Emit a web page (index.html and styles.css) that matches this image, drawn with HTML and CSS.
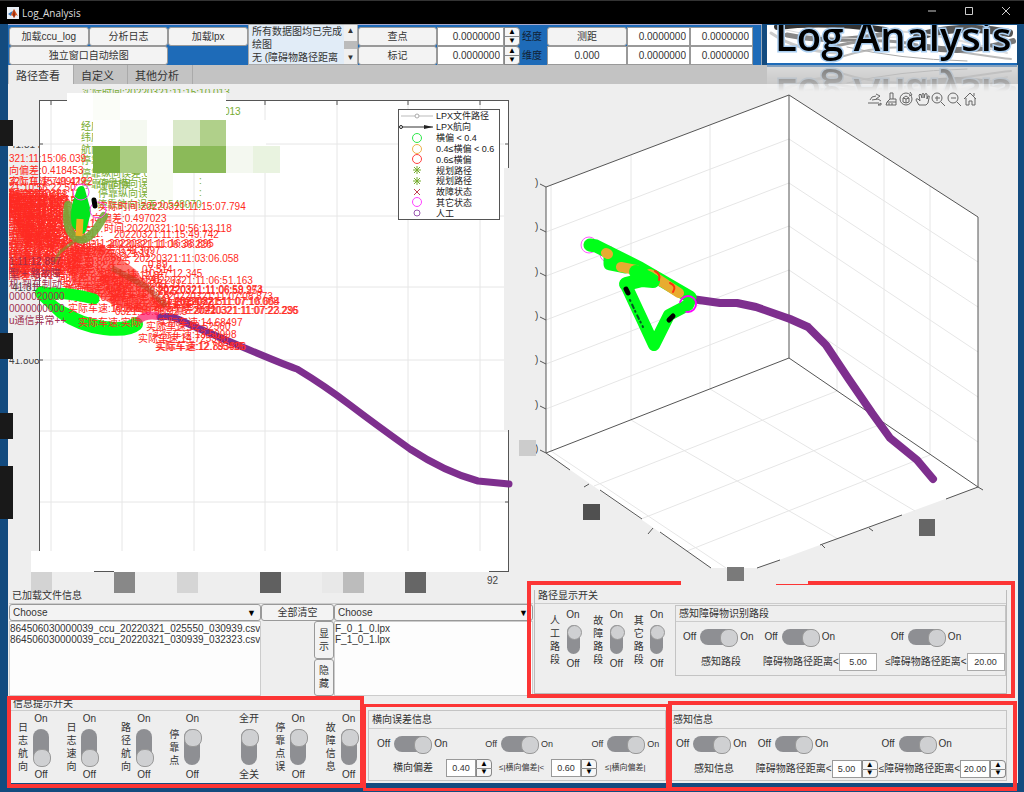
FILE: index.html
```html
<!DOCTYPE html>
<html lang="zh">
<head>
    <meta charset="UTF-8">
    <meta name="viewport" content="width=device-width, initial-scale=1.0">
    <title>Log_Analysis</title>
    <link rel="stylesheet" href="styles.css">
</head>
<body>
    <header class="titlebar">
        <svg class="logo" viewBox="0 0 12 12">
            <rect width="12" height="12" fill="#e8eef5"/>
            <path d="M1 7l3-2 2-1-2 5z" fill="#3a78b8"/>
            <path d="M4 8L7 2l4 7-2-1-2 3-1-2z" fill="#d9541e"/>
            <path d="M7 2l-1 6 1 3 1-3z" fill="#8a2a12"/>
        </svg>
        <span class="window-title">Log_Analysis</span>
        <button class="win-btn" aria-label="最小化"><svg viewBox="0 0 10 10"><path d="M1 5h8"/></svg></button>
        <button class="win-btn" aria-label="最大化"><svg viewBox="0 0 10 10"><path d="M1.5 1.5h7v7h-7z"/></svg></button>
        <button class="win-btn" aria-label="关闭"><svg viewBox="0 0 10 10"><path d="M1 1l8 8M9 1l-8 8"/></svg></button>
    </header>

    <main class="app">
        <div class="toolbar">
            <div class="actions">
                <button class="btn">加载ccu_log</button>
                <button class="btn">分析日志</button>
                <button class="btn">加载lpx</button>
                <button class="btn wide">独立窗口自动绘图</button>
            </div>
            <div class="log">
                <textarea class="log-text" aria-label="日志" readonly>所有数据图均已完成
绘图
无 (障碍物路径距离</textarea>
                <div class="scrollbar"><span>▲</span><i></i><span>▼</span></div>
            </div>
            <div class="points">
                <button class="btn">查点</button>
                <div class="spinner">
                    <input id="lng" value="0.0000000">
                    <div class="arrows"><button aria-label="加">▲</button><button aria-label="减">▼</button></div>
                </div>
                <label class="coord" for="lng">经度</label>
                <button class="btn">测距</button>
                <input class="num" aria-label="起点经度" value="0.0000000">
                <input class="num" aria-label="终点经度" value="0.0000000">
                <button class="btn">标记</button>
                <div class="spinner">
                    <input id="lat" value="0.0000000">
                    <div class="arrows"><button aria-label="加">▲</button><button aria-label="减">▼</button></div>
                </div>
                <label class="coord" for="lat">维度</label>
                <input class="num center" aria-label="距离" value="0.000">
                <input class="num" aria-label="起点维度" value="0.0000000">
                <input class="num" aria-label="终点维度" value="0.0000000">
            </div>
            <div class="banner">
                <svg viewBox="0 0 250 40" preserveAspectRatio="xMidYMid slice">
                    <rect width="250" height="40" fill="#fff"/>
                    <g fill="none" stroke-linecap="round">
                        <path d="M10 2Q60-4 118 5" stroke="#333" stroke-width="6"/>
                        <path d="M20 10Q70 20 122 8" stroke="#888" stroke-width="5"/>
                        <path d="M60 24Q100 10 150 20" stroke="#999" stroke-width="3"/>
                        <path d="M70 33Q120 16 180 25T244 34" stroke="#bbb" stroke-width="2"/>
                        <path d="M150 12Q190-2 242 8" stroke="#555" stroke-width="8"/>
                        <path d="M160 22Q200 30 246 16" stroke="#777" stroke-width="6"/>
                        <path d="M4 8Q30 26 70 28" stroke="#ccc" stroke-width="3"/>
                        <path d="M80 22Q130 34 200 36" stroke="#aaa" stroke-width="1"/>
                        <path d="M130 6Q180 10 240 28" stroke="#ddd" stroke-width="2"/>
                        <path d="M14 4Q70 18 130 12" stroke="#ddd" stroke-width="1"/>
                    </g>
                    <path d="M0 39H250" stroke="#1e6bb8" stroke-width="2"/>
                    <text class="banner-text" x="8" y="26">Log Analysis</text>
                </svg>
            </div>
        </div>

        <nav class="tabs">
            <button class="tab active">路径查看</button>
            <button class="tab">自定义</button>
            <button class="tab">其他分析</button>
        </nav>

        <svg class="plots" viewBox="8 84 1010 506">
            <defs>
                <clipPath id="axes-clip"><rect x="9" y="89" width="500" height="484"/></clipPath>
                <clipPath id="strip-clip"><rect x="80" y="89" width="150" height="4"/></clipPath>
                <clipPath id="tick-clip"><rect x="9" y="359" width="30" height="10"/><rect x="9" y="146" width="30" height="5"/></clipPath>
                <g id="asterisk"><path d="M-4 0H4M0-4V4M-3-3L3 3M3-3L-3 3" stroke="#77ac30"/></g>
            </defs>

            <!-- 2D axes -->
            <path d="M39 101H509V168H504V430H509V572H31V551H39Z" fill="#fff"/>
            <path class="grid" d="M51 101V551M122 101V551M194 101V551M265 101V551M337 101V551M408 101V551M480 101V551M39 144H504M39 216H504M39 287H504M39 360H504M39 431H509M39 502H509"/>
            <path class="axis" d="M39.5 551V101M39 100.500H509M508.500 100V168M508.500 430V571M489 571.500H509M94 571.500H114M51 101v4M265 101v4M337 101v4M408 101v4M480 101v4M39 144h4M39 216h4M39 287h4M39 360h4M505 144h4M505 502h4"/>
            <text class="tick" x="10" y="148" clip-path="url(#tick-clip)">41.814</text>
            <text class="tick" x="9" y="364" clip-path="url(#tick-clip)">41.808</text>
            <text class="tick" x="487" y="584">92</text>

            <g class="note green">
                <text x="82" y="96" clip-path="url(#strip-clip)">实际时间:20220321:11:15:10.013</text>
                <text x="224" y="115">013</text>
                <text x="81" y="130">经度</text>
                <text x="81" y="141">纬度</text>
                <text x="81" y="153">航向</text>
                <text x="81" y="164">停靠</text>
                <text x="81" y="177">停靠纵向误差:0.4</text>
                <text x="81" y="188">停靠航向误</text>
                <text x="98" y="187">停靠横向误</text>
                <text x="98" y="197">停靠纵向误</text>
                <text x="97" y="208">停靠航向误差:0.548070</text>
                <text x="199" y="184">:</text>
                <text x="199" y="196">:</text>
            </g>

            <path d="M160 317Q170 315 180 320T240 346T297 369Q325 386 350 405T410 449Q445 472 478 481L509 484" fill="none" stroke="#7e2f8e" stroke-width="7" stroke-linecap="round" stroke-linejoin="round"/>

            <path d="M64 248L104 246L136 270L162 306L146 314L112 304L74 284Z" fill="#ff1b12" opacity="0.6"/>
            <g id="cloud" class="note red" clip-path="url(#axes-clip)"></g>

            <path d="M42 293L62 312Q80 325 104 328T136 324" fill="none" stroke="#00ff19" stroke-width="14" stroke-linecap="round"/>
            <path d="M42 293Q68 292 94 299" fill="none" stroke="#00ff19" stroke-width="11" stroke-linecap="round"/>
            <path d="M54 299L74 303L88 312Q66 311 54 299" fill="#fff"/>
            <path d="M81 190Q76 204 74 214T82 230L87 212Z" fill="#00e61c" stroke="#00e61c" stroke-width="8" stroke-linejoin="round"/>
            <path d="M68 205Q64 230 76 238T104 216" fill="none" stroke="#77a83a" stroke-width="8" stroke-linecap="round" opacity="0.9"/>
            <path d="M80 219L79 236" fill="none" stroke="#edb120" stroke-width="7"/>
            <path d="M76 240L60 252L54 262" fill="none" stroke="#8d8a2a" stroke-width="3" opacity="0.7"/>
            <path d="M112 268L148 288L166 306" fill="none" stroke="#b3401c" stroke-width="6" opacity="0.5"/>
            <circle cx="81" cy="192" r="8" fill="none" stroke="#ff4df5"/>
            <circle cx="98" cy="210" r="8" fill="none" stroke="#ff4df5"/>
            <path d="M94 200L95 206" stroke="#000" stroke-width="5" stroke-linecap="round"/>
            <path d="M138 321Q144 314 158 316" fill="none" stroke="#ff1464" stroke-width="8" opacity="0.7"/>
            <g class="note red">
                <text x="68" y="312">实际车速:10.2884</text>
                <text x="78" y="326">实际车速:实际</text>
            </g>
            <text class="tick" x="12" y="291">41.81</text>

            <g class="note maroon" clip-path="url(#axes-clip)">
                <text x="9" y="265">1:11:12.897</text>
                <text x="9" y="277">型:+ 路故障</text>
                <text x="9" y="288">机:刹车制动</text>
                <text x="9" y="300">0000020000</text>
                <text x="9" y="312">0000000000</text>
                <text x="9" y="324">u通信异常++</text>
            </g>

            <!-- legend -->
            <rect x="398.500" y="109.500" width="101" height="110" fill="#fff" stroke="#555"/>
            <path d="M401 116H433" stroke="#bbb"/>
            <circle cx="417" cy="116" r="2" fill="#fff" stroke="#aaa"/>
            <path d="M401 127H433" stroke="#333"/>
            <circle cx="401" cy="127" r="1.500" fill="#fff" stroke="#222"/>
            <path d="M433 127l-9-2v4z" fill="#222"/>
            <g fill="none">
                <circle cx="417" cy="138" r="4.500" stroke="#2fe84a"/>
                <circle cx="417" cy="149" r="4.500" stroke="#edb14a"/>
                <circle cx="417" cy="159" r="4.500" stroke="#ff4040"/>
                <use href="#asterisk" x="417" y="170"/>
                <use href="#asterisk" x="417" y="181"/>
                <path d="M414 189l6 6M420 189l-6 6" stroke="#c04050"/>
                <circle cx="417" cy="202" r="4.500" stroke="#ff40ff"/>
                <circle cx="417" cy="213" r="3" stroke="#9a55b0"/>
            </g>
            <g class="legend-text">
                <text x="436" y="119">LPX文件路径</text>
                <text x="436" y="130">LPX航向</text>
                <text x="436" y="141">横偏 &lt; 0.4</text>
                <text x="436" y="152">0.4≤横偏 &lt; 0.6</text>
                <text x="436" y="163">0.6≤横偏</text>
                <text x="436" y="174">规划路径</text>
                <text x="436" y="184">规划路径</text>
                <text x="436" y="195">故障状态</text>
                <text x="436" y="206">其它状态</text>
                <text x="436" y="217">人工</text>
            </g>

            <!-- masked labels -->
            <path d="M67 93H226V120H266V146H93V120H67Z" fill="#fff"/>
            <g>
                <rect x="93" y="93" width="27" height="27" fill="#fbfdf8"/>
                <rect x="120" y="120" width="27" height="26" fill="#f5f9f1"/>
                <rect x="173" y="120" width="27" height="26" fill="#d9e8c8"/>
                <rect x="200" y="120" width="26" height="26" fill="#b0d08a"/>
                <rect x="93" y="146" width="27" height="27" fill="#78ad3e"/>
                <rect x="120" y="146" width="27" height="27" fill="#aacd82"/>
                <rect x="147" y="146" width="26" height="27" fill="#f8fbf4"/>
                <rect x="173" y="146" width="53" height="27" fill="#8bba59"/>
                <rect x="226" y="146" width="27" height="27" fill="#f4f8f0"/>
                <rect x="253" y="146" width="27" height="27" fill="#e9f3e0"/>
                <rect x="147" y="173" width="26" height="27" fill="#f8fbf3"/>
            </g>
            <g fill="#191919">
                <rect x="0" y="120" width="13" height="26"/>
                <rect x="0" y="333" width="13" height="26"/>
                <rect x="0" y="413" width="13" height="26"/>
                <rect x="0" y="466" width="13" height="53"/>
            </g>
            <rect x="31" y="572" width="21" height="21" fill="#d3d3d3"/>
            <rect x="114" y="572" width="21" height="21" fill="#888"/>
            <rect x="177" y="572" width="21" height="21" fill="#d5d5d5"/>
            <rect x="260" y="572" width="21" height="21" fill="#606060"/>
            <rect x="322" y="572" width="21" height="21" fill="#e8e8e8"/>
            <rect x="343" y="572" width="21" height="21" fill="#bcbcbc"/>
            <rect x="405" y="572" width="21" height="21" fill="#666"/>

            <!-- 3D axes -->
            <path d="M546 187L789 95L978 217V487L757 568H711L546 453Z" fill="#fff"/>
            <path class="grid" d="M546 232L789 139L978 262M546 276L789 183L978 307M546 320L789 226L978 352M546 364L789 270L978 397M546 409L789 314L978 442
                M551 185V451M631 155V420M710 125V389M837 126V391M884 156V423M930 186V455
                M551 451L726 568M631 420L838 539M710 389L915 511M837 391L594 486M884 423L641 519M930 455L687 551"/>
            <path class="axis" d="M546 453V187L789 95V358L546 453L570 470M789 95L978 217V487L789 358M978 487L946 499M902 515L820 545M780 560L757 568M600 490L642 519M660 532L711 568"/>
            <path class="axis" d="M546 187l-6-3M546 232l-6-3M546 276l-6-3M546 320l-6-3M546 364l-6-3M546 409l-6-3M546 453l-6-3M589 484l-5 3M653 528l-5 6M822 545l3 3M869 528l4 3M978 487l5 3"/>
            <g class="tick">
                <text x="535" y="186">)</text>
                <text x="535" y="230">)</text>
                <text x="535" y="275">)</text>
                <text x="535" y="319">)</text>
                <text x="535" y="363">)</text>
                <text x="535" y="408">)</text>
                <text x="535" y="452">)</text>
            </g>
            <rect x="519" y="440" width="17" height="16" fill="#ccc"/>
            <rect x="583" y="504" width="17" height="16" fill="#505050"/>
            <rect x="727" y="567" width="17" height="17" fill="#7a7a7a"/>
            <rect x="919" y="519" width="16" height="17" fill="#666"/>

            <g fill="none" stroke-linecap="round" stroke-linejoin="round">
                <path d="M692 299L720 303L737 303L756 307L790 319L808 327L826 345L848 378L872 413L890 438L917 460L933 479" stroke="#7e2f8e" stroke-width="8"/>
                <circle cx="589" cy="245" r="8" stroke="#ff5cff"/>
                <circle cx="608" cy="254" r="8" stroke="#ff5cff"/>
                <path d="M590 245L596 246L612 254L640 268L690 297" stroke="#00ff19" stroke-width="13"/>
                <path d="M610 256L610 264L625 267" stroke="#00ff19" stroke-width="13"/>
                <path d="M606 253L608 254M621 267L636 270M650 274L679 293" stroke="#e8ac30" stroke-width="10"/>
                <path d="M626 284L642 280L653 281" stroke="#00ff19" stroke-width="14"/>
                <path d="M636 272L650 279" stroke="#00ff19" stroke-width="14"/>
                <path d="M626 285L654 345L669 315L688 305" stroke="#00ff19" stroke-width="12"/>
                <path d="M655 271Q661 274 659 280M670 283Q677 286 673 292" stroke="#ff3010" stroke-width="2"/>
                <path d="M626 289L628 293M669 320L673 316" stroke="#000" stroke-width="5"/>
                <path d="M630 300L636 313L643 327" stroke="#052" stroke-width="2" stroke-dasharray="1 4 4 3"/>
                <circle cx="688" cy="304" r="8" stroke="#ff00ff" stroke-width="2"/>
                <path d="M680 309L690 303" stroke="#00ff19" stroke-width="10"/>
            </g>

            <!-- axes tools -->
            <g class="tools">
                <path d="M868 103h11M870 100q1-4 6-4M876 94l4 2-4 3M872 100l6-1 3 2M878 105h3v-2z"/>
                <path d="M890 93h3v6h3v6h-10l1-3 3-3zM887 102h9M890 99h3M889 105v-2M892 105v-2"/>
                <circle cx="906" cy="99" r="6"/>
                <path d="M903 98l3-2 3 2v4l-3 1-3-1zM903 98l3 1 3-1M906 99v4M910 92l2 3-3 1"/>
                <path d="M919 105l-3-5q0-2 2-1l2 2-1-6q1-2 2 0l1 3v-4q1-1 2 0v4l1-4q1-1 2 0v5l1-3q2-1 1 2l-1 5-2 2z"/>
                <circle cx="937" cy="98" r="5"/>
                <path d="M941 102l4 4M935 98h5M937 96v5"/>
                <circle cx="953" cy="98" r="5"/>
                <path d="M957 102l4 4M951 98h5"/>
                <path d="M964 99l6-6 6 6M966 98v7h3v-4h3v4h3v-7M974 96v-3"/>
            </g>
        </svg>

        <div class="row files-row">
            <section class="files">
                <h2 class="panel-title">已加载文件信息</h2>
                <div class="files-grid">
                    <div class="file-col">
                        <div class="drop"><select aria-label="日志文件"><option>Choose</option></select></div>
                        <select class="list" aria-label="已加载日志" multiple>
                            <option>864506030000039_ccu_20220321_025550_030939.csv</option>
                            <option>864506030000039_ccu_20220321_030939_032323.csv</option>
                        </select>
                    </div>
                    <div class="file-btns">
                        <button class="btn clear">全部清空</button>
                        <button class="btn tall">显示</button>
                        <button class="btn tall">隐藏</button>
                    </div>
                    <div class="file-col">
                        <div class="drop"><select aria-label="路径文件"><option>Choose</option></select></div>
                        <select class="list" aria-label="已加载路径" multiple>
                            <option>F_0_1_0.lpx</option>
                            <option>F_1_0_1.lpx</option>
                        </select>
                    </div>
                </div>
            </section>

            <section class="paths">
                <div class="mark mark-paths"></div>
                <div class="mark-gap"></div>
                <h2 class="panel-title">路径显示开关</h2>
                <div class="paths-body">
                    <div class="v-switches">
                        <label class="v-switch small"><span class="v-name">人工路段</span><span class="v-col">On<input type="checkbox" checked>Off</span></label>
                        <label class="v-switch small"><span class="v-name">故障路段</span><span class="v-col">On<input type="checkbox" checked>Off</span></label>
                        <label class="v-switch small"><span class="v-name">其它路段</span><span class="v-col">On<input type="checkbox" checked>Off</span></label>
                    </div>
                    <div class="panel sense-paths">
                        <h3 class="panel-title">感知障碍物识别路段</h3>
                        <div class="sw-row sense-sw">
                            <label class="switch">Off<input type="checkbox" checked>On</label>
                            <label class="switch">Off<input type="checkbox" checked>On</label>
                            <label class="switch">Off<input type="checkbox" checked>On</label>
                        </div>
                        <div class="sw-row sense-val">
                            <span>感知路段</span>
                            <label for="p-near">障碍物路径距离&lt;</label>
                            <input id="p-near" class="box" value="5.00">
                            <label for="p-far">≤障碍物路径距离&lt;</label>
                            <input id="p-far" class="box" value="20.00">
                        </div>
                    </div>
                </div>
            </section>
        </div>

        <div class="row info-row">
            <section class="tips">
                <div class="mark mark-tips"></div>
                <h2 class="panel-title">信息提示开关</h2>
                <div class="tips-body">
                    <label class="v-switch"><span class="v-name">日志航向</span><span class="v-col">On<input type="checkbox">Off</span></label>
                    <label class="v-switch"><span class="v-name">日志速向</span><span class="v-col">On<input type="checkbox">Off</span></label>
                    <label class="v-switch"><span class="v-name">路径航向</span><span class="v-col">On<input type="checkbox">Off</span></label>
                    <label class="v-switch"><span class="v-name">停靠点</span><span class="v-col">On<input type="checkbox" checked>Off</span></label>
                    <label class="v-switch"><span class="v-col">全开<input type="checkbox" checked>全关</span></label>
                    <label class="v-switch"><span class="v-name">停靠点误</span><span class="v-col">On<input type="checkbox" checked>Off</span></label>
                    <label class="v-switch"><span class="v-name">故障信息</span><span class="v-col">On<input type="checkbox" checked>Off</span></label>
                </div>
            </section>

            <section class="lateral">
                <div class="mark mark-lateral"></div>
                <div class="panel">
                    <h2 class="panel-title">横向误差信息</h2>
                    <div class="sw-row lateral-sw">
                        <label class="switch">Off<input type="checkbox" checked>On</label>
                        <label class="switch mini">Off<input type="checkbox" checked>On</label>
                        <label class="switch mini">Off<input type="checkbox" checked>On</label>
                    </div>
                    <div class="sw-row lateral-val">
                        <label for="l-low">横向偏差</label>
                        <div class="spinner box-spin">
                            <input id="l-low" value="0.40">
                            <div class="arrows"><button aria-label="加">▲</button><button aria-label="减">▼</button></div>
                        </div>
                        <label class="mini" for="l-high">≤|横向偏差|&lt;</label>
                        <div class="spinner box-spin">
                            <input id="l-high" value="0.60">
                            <div class="arrows"><button aria-label="加">▲</button><button aria-label="减">▼</button></div>
                        </div>
                        <span class="mini">≤|横向偏差|</span>
                    </div>
                </div>
            </section>

            <section class="sense">
                <div class="mark mark-sense"></div>
                <div class="panel">
                    <h2 class="panel-title">感知信息</h2>
                    <div class="sw-row sense-sw">
                        <label class="switch">Off<input type="checkbox" checked>On</label>
                        <label class="switch">Off<input type="checkbox" checked>On</label>
                        <label class="switch">Off<input type="checkbox" checked>On</label>
                    </div>
                    <div class="sw-row sense-val">
                        <span>感知信息</span>
                        <label for="s-near">障碍物路径距离&lt;</label>
                        <div class="spinner box-spin">
                            <input id="s-near" value="5.00">
                            <div class="arrows"><button aria-label="加">▲</button><button aria-label="减">▼</button></div>
                        </div>
                        <label for="s-far">≤障碍物路径距离&lt;</label>
                        <div class="spinner box-spin">
                            <input id="s-far" value="20.00">
                            <div class="arrows"><button aria-label="加">▲</button><button aria-label="减">▼</button></div>
                        </div>
                    </div>
                </div>
            </section>
        </div>
    </main>

    <script src="cloud.js"></script>
</body>
</html>
```
FILE: styles.css
```css
* {
    box-sizing: border-box;
}
body {
    margin: 0;
    min-height: 100vh;
    background-color: #134b7f;
    color: #333;
    font-family: "Liberation Sans", "Noto Sans CJK SC", sans-serif;
    font-size: 10px;
    line-height: 12px;
}
button, input, select, textarea {
    margin: 0;
    padding: 0;
    min-width: 0;
    border-radius: 0;
    font: inherit;
    color: inherit;
}
h2, h3 {
    margin: 0;
    font-size: 10px;
    font-weight: normal;
}

/* title bar */
.titlebar {
    display: flex;
    align-items: center;
    height: 24px;
    padding: 0 0 0 7px;
    border-top: 1px solid #333;
    background-color: #000;
    color: #ddd;
}
.logo {
    width: 12px;
    height: 12px;
}
.window-title {
    flex: 1;
    margin-left: 3px;
    font-family: "Open Sans", sans-serif;
}
.win-btn {
    width: 37px;
    height: 23px;
    border: 0;
    background: none;
}
.win-btn svg {
    width: 10px;
    height: 10px;
    fill: none;
    stroke: #ccc;
}

.app {
    padding: 0 6px 0 8px;
}

/* toolbar */
.toolbar {
    display: grid;
    grid-template-columns: 240fr 110fr 404fr 256fr;
    height: 41px;
}
.actions, .points {
    display: grid;
    grid-template-rows: 19px 19px;
    padding: 2px 0 0 1px;
    border-top: 1px solid #aac;
    background-color: #1e6bb8;
}
.actions {
    grid-template-columns: 1fr 1fr 1fr;
}
.wide {
    grid-column: span 2;
}
.btn {
    border: 1px solid #999;
    border-radius: 3px;
    background-color: #f3f3f3;
}
.log {
    display: flex;
    min-width: 0;
    border: 1px solid #aaa;
    background-color: #e1ecf7;
}
.log-text {
    flex: 1;
    padding: 0 0 0 3px;
    border: 0;
    background: none;
    line-height: 13px;
    resize: none;
    overflow: hidden;
    white-space: pre;
}
.scrollbar {
    display: flex;
    flex-direction: column;
    justify-content: space-between;
    width: 13px;
    background-color: #f0f0f0;
    font-size: 8px;
    text-align: center;
}
.scrollbar i {
    height: 8px;
    background-color: #bbb;
}
.points {
    grid-template-columns: 79fr 83fr 27fr 80fr 63fr 63fr;
    padding: 2px 8px 0 0;
    border-right: 1px solid #9ab;
}
.spinner {
    display: flex;
    min-width: 0;
}
.spinner input, .num {
    width: 100%;
    border: 1px solid #999;
    padding-right: 3px;
    background-color: #fff;
    text-align: right;
}
.num.center {
    padding: 0;
    text-align: center;
}
.arrows {
    display: flex;
    flex: none;
    flex-direction: column;
    width: 16px;
}
.arrows button {
    flex: 1;
    border: 1px solid #888;
    background-color: #f6f6f6;
    color: #000;
    font-size: 8px;
    line-height: 6px;
}
.arrows button:first-child {
    border-radius: 0 4px 0 0;
}
.arrows button:last-child {
    border-radius: 0 0 4px 0;
    border-top: 0;
}
.coord {
    align-self: center;
    padding-left: 2px;
    color: #123;
    white-space: nowrap;
}
.banner {
    z-index: 1;
    padding: 1px 1px 0 5px;
    -webkit-box-reflect: below 0 linear-gradient(transparent 35%, rgba(0, 0, 0, 0.4));
}
.banner svg {
    display: block;
    width: 100%;
    height: 40px;
}
.banner-text {
    font-family: "Open Sans", sans-serif;
    font-size: 40px;
    font-weight: 600;
    fill: #000;
    stroke: #a9cdf0;
    stroke-width: 3px;
    paint-order: stroke;
}

/* tabs */
.tabs {
    display: flex;
    height: 19px;
    padding-left: 1px;
    background-color: #c3c3c3;
}
.tab {
    padding: 3px 13px 0 7px;
    border: 0;
    border-right: 1px solid #aaa;
    background-color: #c3c3c3;
    font-size: 11px;
}
.tab.active {
    background-color: #eee;
}

/* plots */
.plots {
    display: block;
    width: 100%;
    background-color: #eee;
    overflow: visible;
}
.grid {
    fill: none;
    stroke: #e6e6e6;
}
.axis {
    fill: none;
    stroke: #555;
}
.tick {
    font-size: 10px;
    fill: #444;
}
.legend-text {
    font-size: 9px;
    fill: #222;
}
.note {
    font-size: 10px;
}
.green {
    fill: #77ac30;
}
.red {
    fill: #ff2a22;
}
.maroon {
    fill: #a03050;
}
.tools {
    fill: none;
    stroke: #666;
}

/* lower panels */
.row {
    display: grid;
    background-color: #eee;
}
.files-row {
    grid-template-columns: 526fr 484fr;
    height: 108px;
}
.panel-title {
    padding-left: 3px;
    border-bottom: 1px solid #ccc;
    white-space: nowrap;
}
.files {
    display: flex;
    flex-direction: column;
    min-width: 0;
    padding: 0 1px 2px 1px;
}
.files .panel-title {
    height: 14px;
}
.files-grid {
    flex: 1;
    display: grid;
    grid-template-columns: 252fr 73fr 199fr;
}
.file-col {
    display: flex;
    flex-direction: column;
    min-width: 0;
}
.drop {
    position: relative;
    height: 17px;
}
.drop select {
    width: 100%;
    height: 17px;
    padding: 0 3px;
    border: 1px solid #999;
    border-radius: 3px;
    background-color: #f3f3f3;
    appearance: none;
}
.drop::after {
    content: "▼";
    position: absolute;
    top: 3px;
    right: 5px;
    color: #000;
    font-size: 9px;
}
.list {
    flex: 1;
    padding: 1px 0 0;
    border: 1px solid #ccc;
    background-color: #fdfdfd;
    overflow: hidden;
}
.list option {
    min-height: 11px;
    padding: 0;
    line-height: 11px;
}
.file-btns {
    display: grid;
    grid-template-columns: 1fr 20px;
    grid-template-rows: 17px 1fr 1fr;
}
.clear {
    grid-column: span 2;
}
.tall {
    grid-column: 2;
    padding: 0 4px;
    line-height: 13px;
    word-break: break-all;
}
.paths {
    position: relative;
    margin-right: 11px;
    margin-bottom: 4px;
    border: 1px solid #bbb;
    border-top: 0;
}
.paths > .panel-title {
    height: 14px;
}
.paths-body {
    display: grid;
    grid-template-columns: 140fr 331fr;
}
.v-switches {
    display: grid;
    grid-template-columns: 43fr 40fr 41fr;
    align-items: start;
    padding: 5px 0 0 15px;
}
.v-switch {
    display: flex;
    align-items: center;
    gap: 3px;
}
.v-name {
    width: 10px;
    line-height: 13px;
    word-break: break-all;
}
.v-col {
    display: flex;
    flex-direction: column;
    align-items: center;
    width: 20px;
}
.panel {
    border: 1px solid #c4c4c4;
}
.sense-paths {
    height: 71px;
    margin-top: 1px;
}
.sense-paths .panel-title {
    height: 16px;
    padding-top: 2px;
}
.sw-row {
    display: grid;
    align-items: center;
    white-space: nowrap;
}
.switch {
    display: flex;
    align-items: center;
    gap: 4px;
}
.mini {
    font-size: 8px;
}
.switch.mini {
    font-size: 9px;
}
input[type="checkbox"] {
    appearance: none;
    width: 36px;
    height: 16px;
    border-radius: 8px;
    background-color: #8e8f93;
}
input[type="checkbox"]::before {
    content: "";
    display: block;
    width: 16px;
    height: 16px;
    border: 1px solid #999;
    border-radius: 8px;
    background-color: #cfd0d2;
}
.switch input:checked::before {
    margin-left: 20px;
}
.v-switch input[type="checkbox"] {
    width: 16px;
    height: 36px;
    margin: 4px 0;
}
.v-switch input::before {
    margin-top: 20px;
}
.v-switch input:checked::before {
    margin-top: 0;
}
.v-switch.small input[type="checkbox"] {
    width: 13px;
    height: 29px;
}
.v-switch.small input::before {
    width: 13px;
    height: 13px;
}
.sense-sw {
    grid-template-columns: 82fr 127fr 115fr;
    height: 30px;
    padding-left: 7px;
}
.sense-val {
    grid-template-columns: 63fr 77fr 47fr 80fr 39fr;
    height: 20px;
    padding-left: 25px;
}
.box {
    width: 38px;
    height: 18px;
    border: 1px solid #aaa;
    background-color: #fff;
    font-size: 9px;
    text-align: center;
}

/* bottom row */
.info-row {
    grid-template-columns: 355fr 303fr 352fr;
    height: 85px;
}
.tips, .lateral, .sense {
    position: relative;
    min-width: 0;
}
.tips {
    padding-left: 2px;
}
.tips .panel-title {
    height: 13px;
}
.tips-body {
    display: grid;
    grid-template-columns: 48fr 54fr 48fr 69fr 36fr 50fr 37fr;
    padding: 2px 0 0 8px;
}
.lateral, .sense {
    padding: 12px 0 0 5px;
}
.sense {
    padding: 12px 11px 0 5px;
}
.lateral .panel, .sense .panel {
    height: 71px;
}
.lateral .panel-title, .sense .panel-title {
    height: 18px;
    padding-top: 3px;
}
.sense .panel-title {
    padding-left: 1px;
}
.lateral-sw {
    grid-template-columns: 109fr 107fr 74fr;
    height: 29px;
    padding-left: 8px;
}
.lateral-val {
    grid-template-columns: 53fr 53fr 52fr 54fr 60fr;
    height: 20px;
    padding-left: 24px;
}
.sense .sense-sw {
    grid-template-columns: 82fr 124fr 125fr;
    padding-left: 4px;
}
.sense .sense-val {
    grid-template-columns: 63fr 76fr 48fr 81fr 44fr;
    padding-left: 22px;
}
.box-spin {
    width: 46px;
    height: 18px;
}
.box-spin input {
    padding: 0;
    font-size: 9px;
    text-align: center;
}

/* red frames over the panels */
.mark {
    position: absolute;
    z-index: 2;
    border: 4px solid #fc3535;
    pointer-events: none;
}
.mark-paths {
    inset: -9px -9px -5px -8px;
}
.mark-gap {
    position: absolute;
    z-index: 3;
    top: -9px;
    left: 31%;
    width: 27%;
    height: 5px;
    background: linear-gradient(#fc3535, #fc3535) right 3px / 32px 1px no-repeat #eee;
}
.mark-tips {
    inset: -2px -1px -5px -1px;
}
.mark-lateral {
    inset: 6px -3px -8px 0;
    border-width: 3px;
}
.mark-sense {
    inset: 3px 1px -8px 2px;
}
```
FILE: cloud.js
```js
// labels that stay readable at the edge of the cluster
const labels = [
    [9, 162, "321:11:15:06.039"],
    [9, 174, "向偏差:0.418453"],
    [9, 185, "321:11:15:40.429"],
    [9, 185, "实际车速:7.991122"],
    [9, 191, "21:10:56:22.50"],
    [98, 210, "实际时间:20220321:11:15:07.794"],
    [92, 222, "向偏差:0.497023"],
    [104, 232, "时间:20220321:10:56:13.118"],
    [114, 238, "20220321:11:15:49.742"],
    [109, 247, "20220321:11:16:38.895"],
    [107, 248, "20220321:11:06:36.226"],
    [134, 262, "20220321:11:03:06.058"],
    [130, 254, "1.3097"],
    [148, 268, "0.89"],
    [142, 273, "07.514"],
    [144, 277, "10:47:12.345"],
    [148, 284, "20220321:11:06:51.163"],
    [158, 293, "20220321:11:06:59.973"],
    [158, 294, "20220321:11:06:58.254"],
    [168, 300, "20220321:11:07:08.873"],
    [175, 305, "20220321:11:07:16.664"],
    [174, 305, "20220321:11:07:10.008"],
    [194, 314, "20220321:11:07:23.295"],
    [193, 314, "20220321:11:07:22.236"],
    [158, 326, "实际车速:14.68497"],
    [146, 330, "实际车速:12.52560"],
    [152, 338, "实际车速:13.50998"],
    [138, 342, "实际车速:14.725396"],
    [155, 350, "实际车速:12.785425"],
    [156, 350, "实际车速:12.893896"]
];

const words = ["时间:20220321:11:", "实际车速:12.8", "向偏差:0.3892", "横向偏差:0.41", "0321:10:56:22.5"];

// the dense part: rows of overlapping labels
for (let i = 0; i < 60; i++) {
    const y = 197 + i * 2;
    const left = i < 36 ? 0 : (i - 36) * 4;
    const reach = i < 12 ? 8 : Math.min(80, i * 3);
    labels.push([left + (i * 37) % reach, y, words[i % 5]]);
    if (i < 42) {
        labels.push([-14 + (i * 13) % 22, y, words[(i + 2) % 5]]);
    }
}

const cloud = document.getElementById("cloud");
labels.forEach(([x, y, text]) => {
    const el = document.createElementNS("http://www.w3.org/2000/svg", "text");
    el.setAttribute("x", Math.round(x));
    el.setAttribute("y", Math.round(y));
    el.textContent = text;
    cloud.appendChild(el);
});
```
